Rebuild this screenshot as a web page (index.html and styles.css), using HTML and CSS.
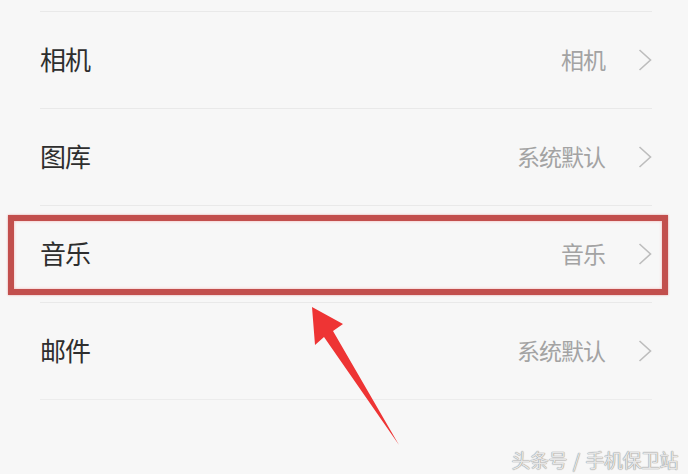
FILE: index.html
```html
<!DOCTYPE html>
<html lang="zh-CN">
<head>
  <meta charset="UTF-8">
  <title>默认应用</title>
  <meta name="viewport" content="width=device-width, initial-scale=1.0">
  <link rel="stylesheet" href="styles.css">
</head>
<body>
  <div class="screen">
    <ul class="list">
      <li class="row"><span class="title">相机</span><span class="value">相机</span><svg class="chev" viewBox="0 0 14 24"><polyline points="1.5,2 12.5,12 1.5,22"/></svg></li>
      <li class="row"><span class="title">图库</span><span class="value">系统默认</span><svg class="chev" viewBox="0 0 14 24"><polyline points="1.5,2 12.5,12 1.5,22"/></svg></li>
      <li class="row"><span class="title">音乐</span><span class="value">音乐</span><svg class="chev" viewBox="0 0 14 24"><polyline points="1.5,2 12.5,12 1.5,22"/></svg></li>
      <li class="row"><span class="title">邮件</span><span class="value">系统默认</span><svg class="chev" viewBox="0 0 14 24"><polyline points="1.5,2 12.5,12 1.5,22"/></svg></li>
    </ul>

    <!-- 标注 -->
    <div class="mark"></div>
    <svg class="arrow" viewBox="0 0 110 150">
      <polygon points="12,7 43,24 33,31 99,145 24,37 15,45"/>
    </svg>
    <div class="watermark">头条号 / 手机保卫站</div>
  </div>
</body>
</html>
```

FILE: styles.css
```css
html, body { margin:0; padding:0; }
body { background:#f7f7f7; font-family:"Noto Sans CJK SC", "Noto Sans", sans-serif; }
.screen { position:relative; width:688px; height:474px; overflow:hidden; background:#f7f7f7; }

.list { list-style:none; margin:0 36px 0 40px; padding:11px 0 0; }
.row { display:flex; align-items:center; height:96px; border-top:1px solid #e9e9e9; }
.row:last-child { border-bottom:1px solid #ececec; }
.title { flex:1; font-size:26px; color:#2e2e2e; letter-spacing:-1px; margin-top:-3px; }
.value { font-size:23px; color:#a3a3a3; margin-right:33px; letter-spacing:-1px; margin-top:-3px; }
.chev { width:14px; height:24px; }
.chev polyline { fill:none; stroke:#bdbdbd; stroke-width:1.6; }

/* Czerwona ramka i strzałka */
.mark { position:absolute; left:8px; top:215px; width:648px; height:68px; border:6px solid #c24f4d; box-shadow:inset 0 0 3px #f3b3b3, 0 0 2px #e7a0a0; }
.arrow { position:absolute; left:300px; top:300px; width:110px; height:150px; }
.arrow polygon { fill:#ee3434; }

.watermark { position:absolute; right:10px; top:446px; font-size:19px; color:#e6e6e6; letter-spacing:-0.5px; word-spacing:2px; text-shadow:0 0 1px #888, 0 0 1px #999; }
```
